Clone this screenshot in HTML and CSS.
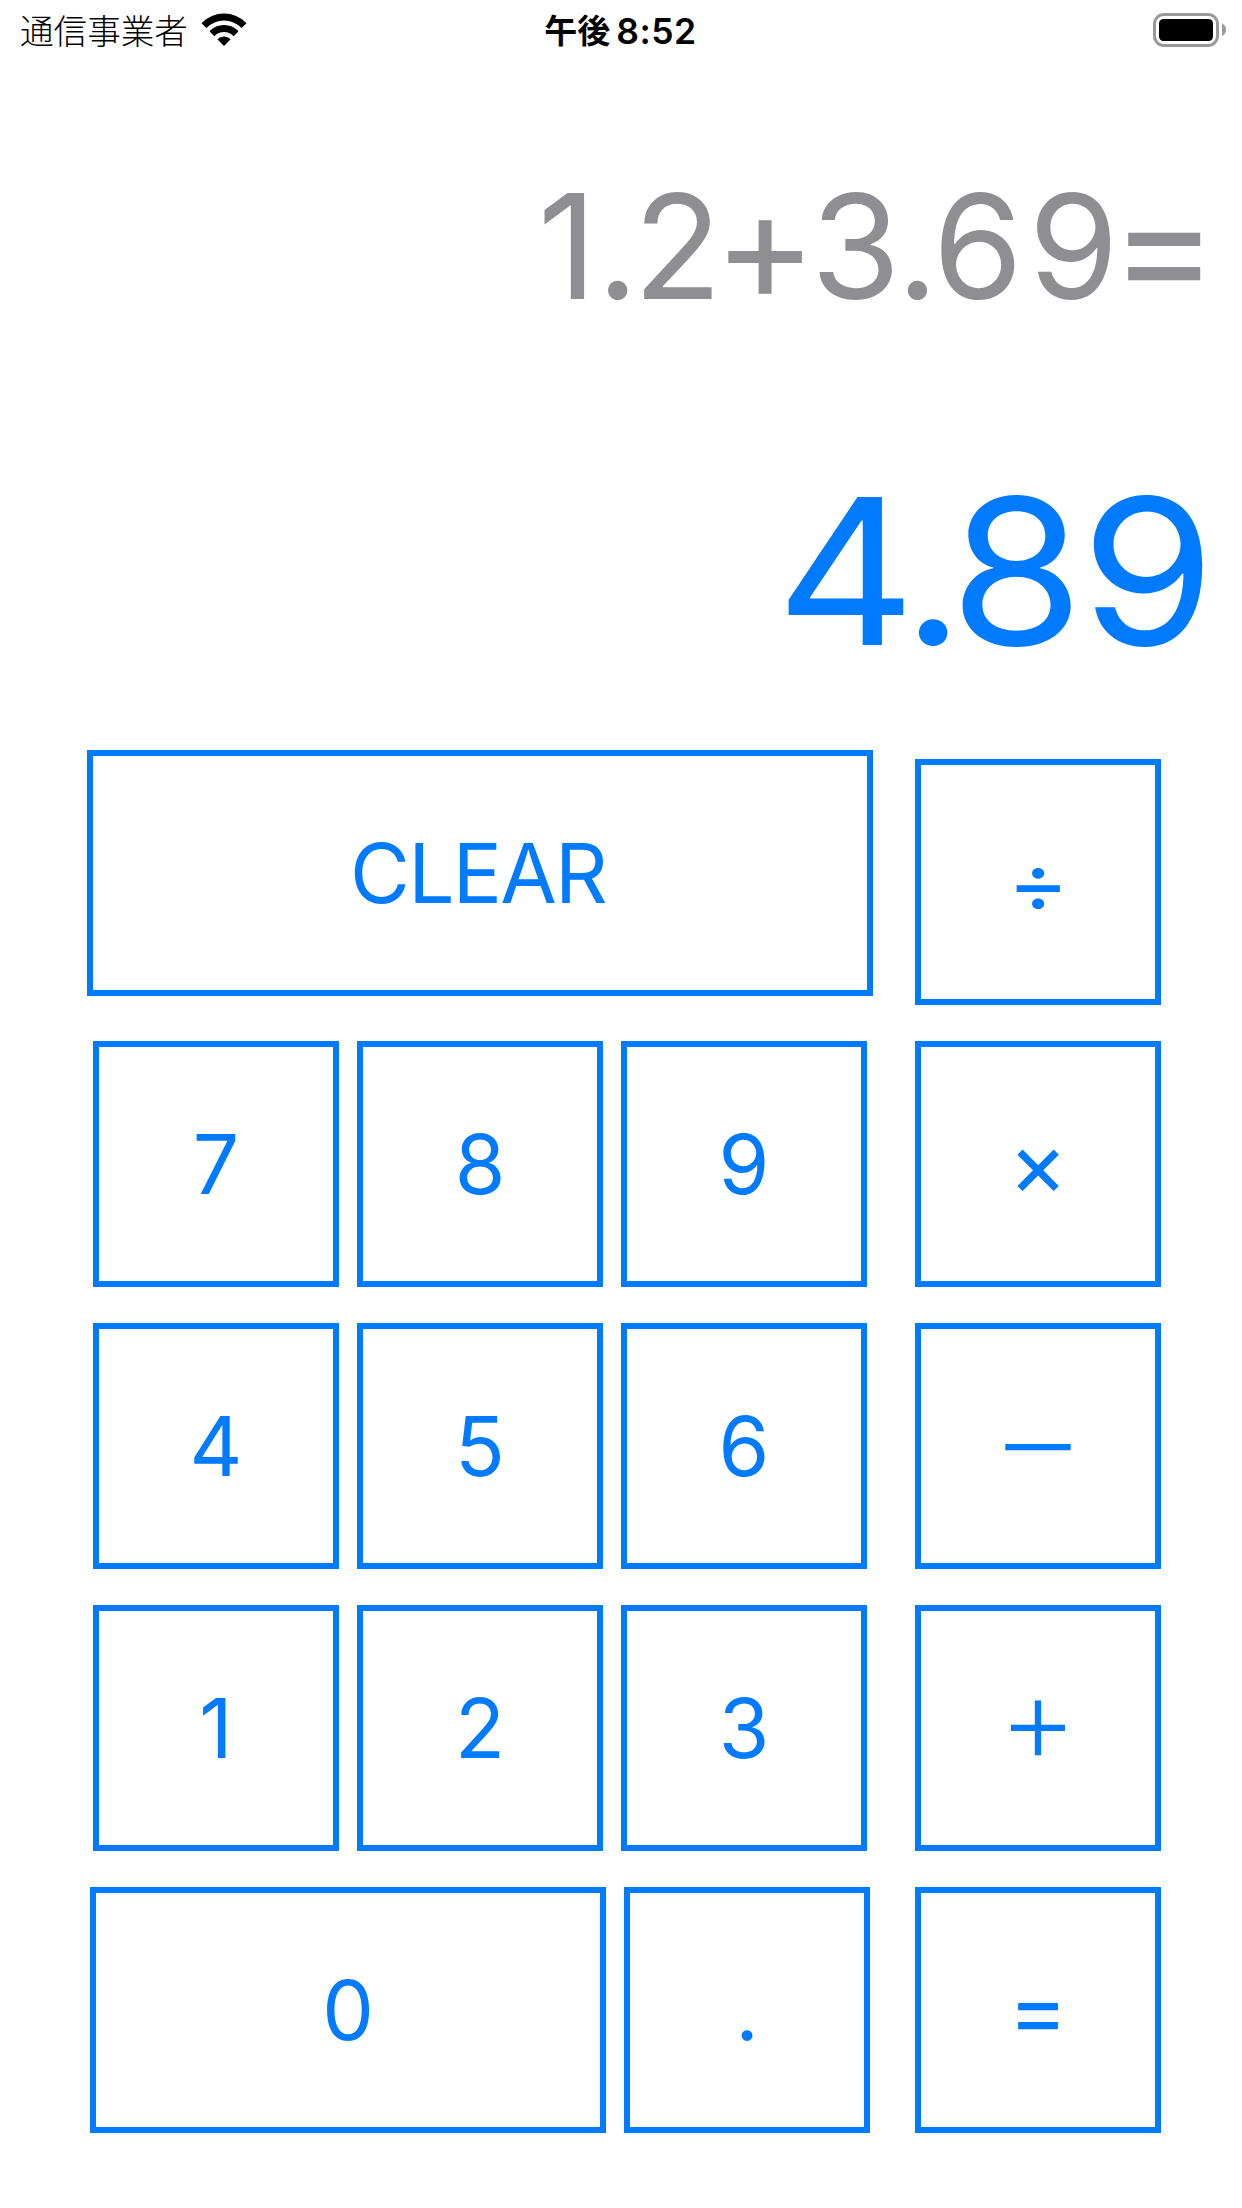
FILE: index.html
```html
<!DOCTYPE html>
<html lang="ja">
<head>
<meta charset="utf-8">
<title>Calculator</title>
<link rel="stylesheet" href="styles.css">
</head>
<body>
<header class="status">
  <div class="status-left">
    <span class="carrier">通信事業者</span>
    <svg class="wifi" viewBox="0 0 46 34" width="46" height="34">
      <path d="M0.5 10.2Q10 0.6 23 0.6Q36 0.6 45.5 10.2L40.6 15.1Q33 7.6 23 7.6Q13 7.6 5.4 15.1Z"/>
      <path d="M8.5 18.3Q14.5 12 23 12Q31.5 12 37.5 18.3L32.6 23.2Q28.5 19 23 19Q17.5 19 13.4 23.2Z"/>
      <path d="M16.4 26.3Q19 23.4 23 23.4Q27 23.4 29.6 26.3L23 33Z"/>
    </svg>
  </div>
  <div class="time"><span class="ampm">午後</span><span class="clock">8:52</span></div>
  <svg class="battery" viewBox="0 0 74 34" width="74" height="34">
    <rect class="battery-shell" x="1.5" y="1.5" width="63" height="31" rx="9.5"/>
    <rect x="6" y="6" width="54" height="22" rx="4.5"/>
    <path class="battery-cap" d="M69 10.5Q73 12.5 73 16.8Q73 21 69 23Z"/>
  </svg>
</header>
<main class="calculator">
  <div class="expression">1<span class="point">.</span><span class="tight">2</span><span class="sign">+</span><span class="snug">3</span><span class="point">.</span><span class="loose">6</span><span class="tight">9</span><span class="sign equals">=</span></div>
  <div class="result"><span class="result-four">4</span><span class="result-point">.</span><span class="result-eight">8</span>9</div>
  <div class="keypad">
    <div class="numbers">
      <button class="key clear">CLEAR</button>
      <div class="row"><button class="key">7</button><button class="key">8</button><button class="key">9</button></div>
      <div class="row"><button class="key">4</button><button class="key">5</button><button class="key">6</button></div>
      <div class="row"><button class="key">1</button><button class="key">2</button><button class="key">3</button></div>
      <div class="row"><button class="key zero">0</button><button class="key">.</button></div>
    </div>
    <div class="operators">
      <button class="key divide"><span class="divide-sign">÷</span></button>
      <button class="key op">×</button>
      <button class="key wide minus">－</button>
      <button class="key wide plus">＋</button>
      <button class="key op">=</button>
    </div>
  </div>
</main>
</body>
</html>
```
FILE: styles.css
```css
* {
  box-sizing: border-box;
}

body {
  margin: 0;
  width: 1242px;
  height: 2208px;
  background: #fff;
  font-family: Inter, "Noto Sans CJK JP", sans-serif;
  font-feature-settings: "calt" 0;
}

.status {
  display: grid;
  grid-template-columns: 1fr auto 1fr;
  align-items: center;
  height: 60px;
  padding: 0 15px 0 20px;
}

.status-left {
  display: flex;
  align-items: center;
  gap: 13px;
}

.carrier {
  font-family: "Noto Sans CJK JP", sans-serif;
  font-size: 33.6px;
  font-weight: 300;
  line-height: 60px;
}

.time {
  display: flex;
  align-items: center;
  gap: 6px;
  height: 60px;
  margin-right: 6px;
  font-weight: 600;
}

.ampm {
  font-family: "Noto Sans CJK JP", sans-serif;
  font-size: 33px;
  font-weight: 700;
  line-height: 58px;
  padding-bottom: 2px;
}

.clock {
  font-size: 35.5px;
  line-height: 56px;
  letter-spacing: 0.5px;
  padding-top: 4px;
}

.battery {
  justify-self: end;
}

.battery-shell {
  fill: none;
  stroke: #999;
  stroke-width: 3;
}

.battery-cap {
  fill: #999;
}

.calculator {
  display: flex;
  flex-direction: column;
}

.expression,
.result {
  text-align: right;
  white-space: nowrap;
}

.expression {
  height: 372px;
  padding-right: 30px;
  line-height: 372px;
  font-size: 145.4px;
  color: #8e8e93;
}

.point {
  letter-spacing: -5.5px;
}

.snug {
  letter-spacing: -4px;
}

.tight {
  letter-spacing: -8.5px;
}

.loose {
  letter-spacing: 5.5px;
}

.sign {
  font-size: 156px;
  line-height: 0;
  letter-spacing: -6px;
  vertical-align: -1.5px;
}

.equals {
  font-size: 163px;
  vertical-align: -4px;
}

.result {
  height: 278px;
  padding-right: 27px;
  line-height: 278px;
  font-size: 203px;
  font-kerning: none;
  color: #007aff;
  transform: scaleX(1.065);
  transform-origin: calc(100% - 27px) 50%;
}

.result-four {
  letter-spacing: -13px;
}

.result-point {
  letter-spacing: -13.5px;
}

.result-eight {
  letter-spacing: -2.5px;
}

.keypad {
  display: flex;
  justify-content: space-between;
  width: 1074px;
  margin: 40px 0 0 87px;
}

.numbers {
  display: flex;
  flex-direction: column;
  align-items: center;
  gap: 36px;
}

.row {
  display: flex;
  gap: 18px;
}

.operators {
  display: flex;
  flex-direction: column;
  gap: 36px;
  margin-top: 9px;
}

.key {
  width: 246px;
  height: 246px;
  padding: 2px 0 0;
  border: 6px solid #007aff;
  border-radius: 0;
  background: #fff;
  color: #007aff;
  font: inherit;
  font-size: 82px;
  line-height: 232px;
}

.clear {
  width: 786px;
  margin-bottom: 9px;
  padding-right: 4px;
  letter-spacing: -1.8px;
}

.zero {
  width: 516px;
}

.divide-sign {
  display: inline-block;
  transform: scaleX(1.15);
}

.op {
  padding: 0;
  font-size: 90px;
}

.wide {
  padding: 0 0 8px;
  font-family: "Noto Sans CJK JP", sans-serif;
  line-height: 226px;
}

.minus {
  font-size: 90px;
}

.plus {
  padding-bottom: 9px;
  font-size: 75px;
  font-weight: 500;
}
```
